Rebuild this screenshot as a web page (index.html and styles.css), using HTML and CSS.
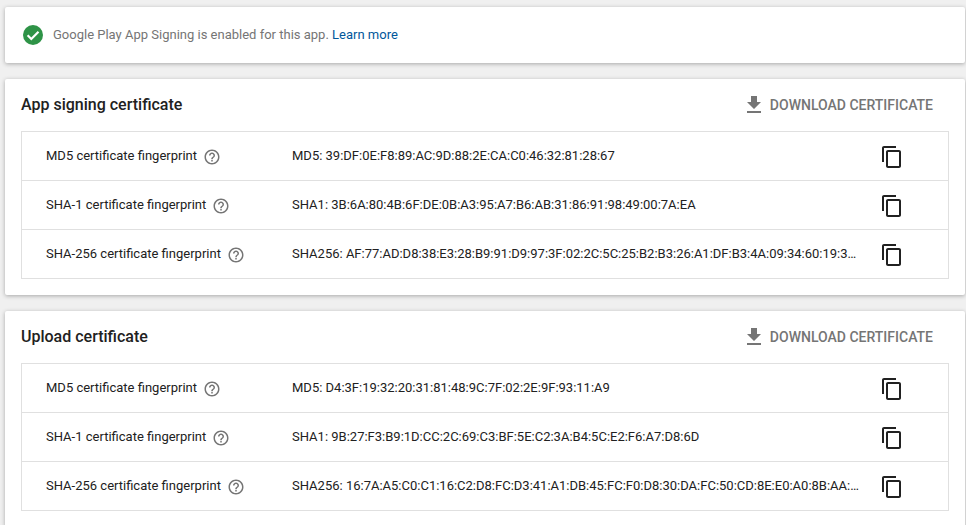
FILE: index.html
```html
<!DOCTYPE html>
<html lang="en">
<head>
<meta charset="utf-8">
<title>App signing</title>
<link rel="stylesheet" href="styles.css">
</head>
<body>
<svg class="defs" width="0" height="0" aria-hidden="true">
  <symbol id="help" viewBox="0 0 24 24"><path d="M11 18h2v-2h-2v2zm1-16C6.48 2 2 6.48 2 12s4.48 10 10 10 10-4.48 10-10S17.52 2 12 2zm0 18c-4.41 0-8-3.59-8-8s3.59-8 8-8 8 3.59 8 8-3.59 8-8 8zm0-14c-2.21 0-4 1.79-4 4h2c0-1.100.9-2 2-2s2 .9 2 2c0 2-3 1.750-3 5h2c0-2.250 3-2.500 3-5 0-2.210-1.790-4-4-4z"/></symbol>
  <symbol id="copy" viewBox="0 0 24 24"><path d="M16 1H4c-1.100 0-2 .9-2 2v14h2V3h12V1zm3 4H8c-1.100 0-2 .9-2 2v14c0 1.100.9 2 2 2h11c1.100 0 2-.9 2-2V7c0-1.100-.9-2-2-2zm0 16H8V7h11v14z"/></symbol>
  <symbol id="download" viewBox="0 0 24 24"><path d="M19 9h-4V3H9v6H5l7 7 7-7zM5 18v2h14v-2H5z"/></symbol>
</svg>

<main class="page">
  <section class="card notice">
    <svg class="check" viewBox="0 0 24 24"><circle cx="12" cy="12" r="10" fill="#2e9347"/><path d="M6.600 12.300l3.700 3.700 7.200-7.200" fill="none" stroke="#fff" stroke-width="2.200"/></svg>
    <p class="notice-text">Google Play App Signing is enabled for this app. <a class="link" href="#">Learn more</a></p>
  </section>

  <section class="card">
    <header class="card-head">
      <h2 class="card-title">App signing certificate</h2>
      <a class="download" href="#"><svg class="download-icon"><use href="#download"/></svg>DOWNLOAD CERTIFICATE</a>
    </header>
    <div class="table">
      <div class="row">
        <div class="label">MD5 certificate fingerprint<svg class="help"><use href="#help"/></svg></div>
        <div class="value">MD5: 39:DF:0E:F8:89:AC:9D:88:2E:CA:C0:46:32:81:28:67</div>
        <svg class="copy"><use href="#copy"/></svg>
      </div>
      <div class="row">
        <div class="label">SHA-1 certificate fingerprint<svg class="help"><use href="#help"/></svg></div>
        <div class="value">SHA1: 3B:6A:80:4B:6F:DE:0B:A3:95:A7:B6:AB:31:86:91:98:49:00:7A:EA</div>
        <svg class="copy"><use href="#copy"/></svg>
      </div>
      <div class="row">
        <div class="label">SHA-256 certificate fingerprint<svg class="help"><use href="#help"/></svg></div>
        <div class="value">SHA256: AF:77:AD:D8:38:E3:28:B9:91:D9:97:3F:02:2C:5C:25:B2:B3:26:A1:DF:B3:4A:09:34:60:19:3…</div>
        <svg class="copy"><use href="#copy"/></svg>
      </div>
    </div>
  </section>

  <section class="card">
    <header class="card-head">
      <h2 class="card-title">Upload certificate</h2>
      <a class="download" href="#"><svg class="download-icon"><use href="#download"/></svg>DOWNLOAD CERTIFICATE</a>
    </header>
    <div class="table">
      <div class="row">
        <div class="label">MD5 certificate fingerprint<svg class="help"><use href="#help"/></svg></div>
        <div class="value">MD5: D4:3F:19:32:20:31:81:48:9C:7F:02:2E:9F:93:11:A9</div>
        <svg class="copy"><use href="#copy"/></svg>
      </div>
      <div class="row">
        <div class="label">SHA-1 certificate fingerprint<svg class="help"><use href="#help"/></svg></div>
        <div class="value">SHA1: 9B:27:F3:B9:1D:CC:2C:69:C3:BF:5E:C2:3A:B4:5C:E2:F6:A7:D8:6D</div>
        <svg class="copy"><use href="#copy"/></svg>
      </div>
      <div class="row">
        <div class="label">SHA-256 certificate fingerprint<svg class="help"><use href="#help"/></svg></div>
        <div class="value">SHA256: 16:7A:A5:C0:C1:16:C2:D8:FC:D3:41:A1:DB:45:FC:F0:D8:30:DA:FC:50:CD:8E:E0:A0:8B:AA:…</div>
        <svg class="copy"><use href="#copy"/></svg>
      </div>
    </div>
  </section>
</main>
</body>
</html>
```
FILE: styles.css
```css
html, body {
  margin: 0;
  height: 100%;
  overflow: hidden;
  background: #f0f0f0;
  font-family: Roboto, "Liberation Sans", sans-serif;
  font-size: 13px;
  color: #212121;
}

.defs {
  display: block;
  height: 0;
}

.page {
  display: flex;
  flex-direction: column;
  gap: 16px;
  padding: 7px 1px 0 5px;
}

.card {
  flex: none;
  background: #fff;
  border-radius: 2px;
  box-shadow: 0 1px 4px rgba(0, 0, 0, 0.3);
  padding: 0 16px 16px;
}

.notice {
  display: flex;
  align-items: center;
  height: 56px;
  box-sizing: border-box;
  padding: 0 16px;
}

.check {
  width: 24px;
  height: 24px;
  margin-right: 8px;
  flex: none;
}

.notice-text {
  margin: 0;
  color: #757575;
  line-height: 20px;
}

.link {
  color: #01579b;
  text-decoration: none;
}

.card-head {
  display: flex;
  align-items: center;
  justify-content: space-between;
  height: 52px;
}

.card-title {
  margin: 0 0 2px;
  font-size: 16px;
  font-weight: 500;
  color: #212121;
}

.download {
  display: flex;
  align-items: center;
  margin-right: 16px;
  color: #757575;
  font-size: 14px;
  font-weight: 500;
  text-decoration: none;
}

.download-icon {
  width: 24px;
  height: 24px;
  margin-right: 4px;
  fill: #757575;
}

.table {
  border: 1px solid #e0e0e0;
}

.row {
  display: flex;
  align-items: center;
  height: 48px;
  padding-left: 24px;
}

.row + .row {
  border-top: 1px solid #e0e0e0;
}

.label {
  display: flex;
  align-items: center;
  width: 246px;
  flex: none;
  margin-bottom: 2px;
}

.help {
  width: 18px;
  height: 18px;
  margin: 4px 0 0 6px;
  fill: #757575;
}

.value {
  width: 566px;
  flex: none;
  white-space: nowrap;
  margin-bottom: 2px;
}

.copy {
  width: 24px;
  height: 24px;
  margin: 2px 0 0 22px;
  fill: #212121;
}
```
